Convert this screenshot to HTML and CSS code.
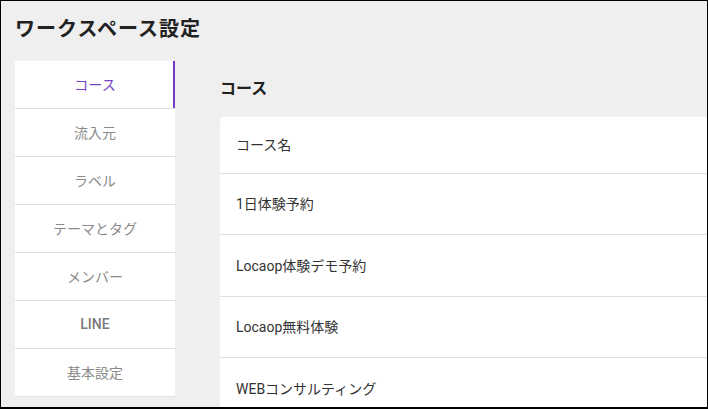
FILE: index.html
```html
<!DOCTYPE html>
<html lang="ja">
<head>
    <meta charset="UTF-8">
    <meta name="viewport" content="width=device-width, initial-scale=1.0">
    <title>ワークスペース設定</title>
    <link rel="stylesheet" href="styles.css">
</head>
<body>

<div class="frame">
    <!-- Page Title -->
    <h1 class="page-title">ワークスペース設定</h1>

    <div class="layout">
        <!-- Side Menu -->
        <nav class="side-menu">
            <a class="menu-item active">コース</a>
            <a class="menu-item">流入元</a>
            <a class="menu-item">ラベル</a>
            <a class="menu-item">テーマとタグ</a>
            <a class="menu-item">メンバー</a>
            <a class="menu-item latin">LINE</a>
            <a class="menu-item">基本設定</a>
        </nav>

        <!-- Main Content -->
        <main class="content">
            <h2 class="section-title">コース</h2>
            <div class="card">
                <div class="row row-head">コース名</div>
                <div class="row">1日体験予約</div>
                <div class="row">Locaop体験デモ予約</div>
                <div class="row">Locaop無料体験</div>
                <div class="row">WEBコンサルティング</div>
            </div>
        </main>
    </div>
</div>

</body>
</html>
```

FILE: styles.css
```css
body {
    margin: 0;
    font-family: Roboto, "Noto Sans CJK JP", sans-serif;
    background-color: #efefef;
}

.frame {
    box-sizing: border-box;
    width: 708px;
    height: 409px;
    border: 1px solid #000;
    border-bottom-width: 2px;
    overflow: hidden;
    padding: 0 0 0 14px;
    background-color: #efefef;
}

.page-title {
    margin: 14px 0 0;
    font-size: 20px;
    line-height: 28px;
    letter-spacing: 1px;
    font-weight: 700;
    color: #212121;
}

.layout {
    display: flex;
    align-items: flex-start;
    margin-top: 18px;
}

/* Side Menu */
.side-menu {
    flex: 0 0 160px;
    display: flex;
    flex-direction: column;
    background-color: #fff;
}

.menu-item {
    box-sizing: border-box;
    height: 48px;
    display: flex;
    align-items: center;
    justify-content: center;
    padding-bottom: 2px;
    border-bottom: 1px solid #e0e0e0;
    font-size: 14px;
    color: #8a8a8a;
    cursor: pointer;
}

.menu-item.latin {
    font-weight: 500;
    color: #7a7a7a;
}

.menu-item.active {
    color: #7442c8;
    box-shadow: inset -2px 0 0 #6f3cc4;
}

/* Course List */
.content {
    flex: 0 0 540px;
    margin-left: 45px;
}

.section-title {
    margin: 16px 0 16px;
    font-size: 16px;
    line-height: 24px;
    font-weight: 700;
    color: #212121;
}

.card {
    background-color: #fff;
    border-radius: 4px;
}

.row {
    box-sizing: border-box;
    height: 61.5px;
    display: flex;
    align-items: center;
    padding: 0 16px 1px;
    border-bottom: 1px solid #e0e0e0;
    font-size: 14px;
    color: #333;
}

.row-head {
    height: 56.5px;
}
```
